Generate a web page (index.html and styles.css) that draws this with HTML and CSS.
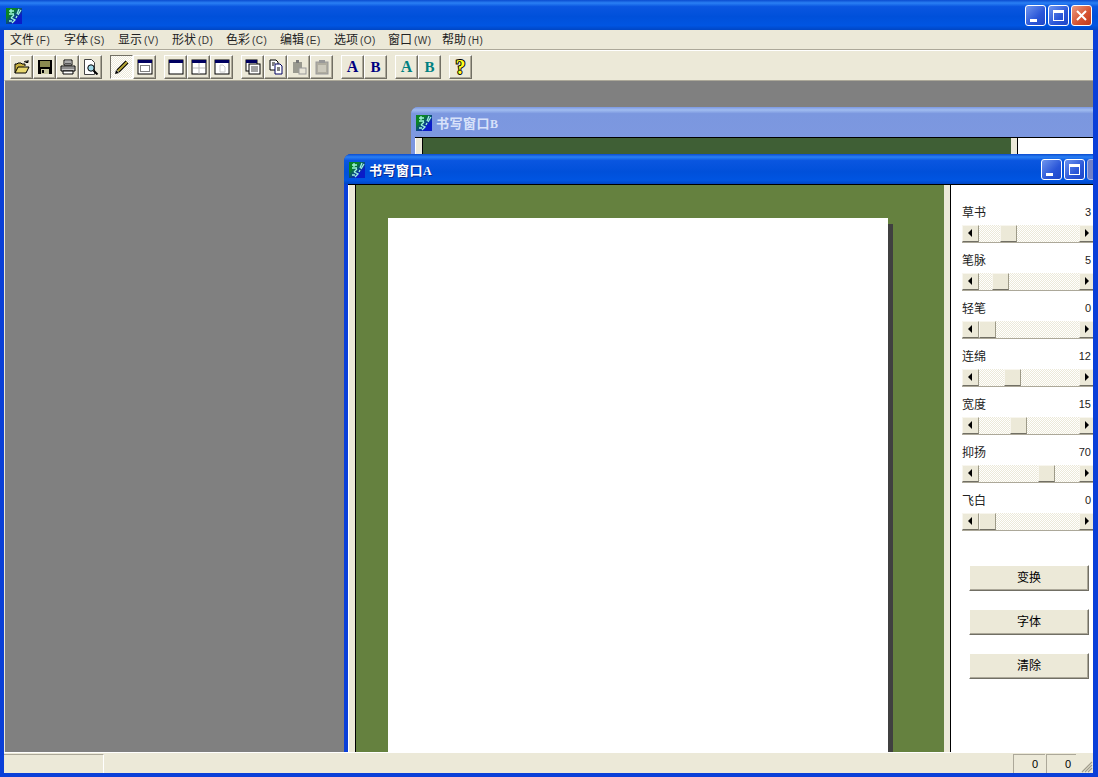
FILE: index.html
```html
<!DOCTYPE html>
<html lang="zh-CN">
<head>
  <meta charset="UTF-8">
  <title>书写窗口</title>
  <link rel="stylesheet" href="styles.css">
</head>
<body>
  <svg class="defs" width="0" height="0">
    <defs>
      <linearGradient id="iconfill" x1="0" y1="0" x2="1" y2="1">
        <stop offset="0.3" stop-color="#0a8424"/>
        <stop offset="0.7" stop-color="#0a1cc8"/>
      </linearGradient>
    </defs>
    <symbol id="appicon" viewBox="0 0 16 16">
      <rect width="16" height="16" fill="url(#iconfill)"/>
      <path d="M3 3h5M5 1v4M3 6h5M8 7l-3 3M5 10l4 2-3 3M3 13h3M13 1l-2 5M15 2l-3 5M11 8l-1 2" stroke="#9ff5dc" stroke-width="1.300" fill="none"/>
    </symbol>
    <symbol id="win" viewBox="0 0 16 16">
      <rect x="1" y="1" width="14" height="14" fill="#fff" stroke="#000"/>
      <rect x="1" y="1" width="14" height="3" fill="#000060"/>
    </symbol>
  </svg>

  <div class="app">
    <div class="titlebar">
      <svg class="appicon"><use href="#appicon"/></svg>
      <div class="capbtns">
        <div class="capbtn"><span class="glyph-min"></span></div>
        <div class="capbtn"><span class="glyph-max"></span></div>
        <div class="capbtn close">
          <svg width="13" height="13" viewBox="0 0 13 13"><path d="M2 2l9 9M11 2l-9 9" stroke="#fff" stroke-width="2"/></svg>
        </div>
      </div>
    </div>

    <div class="main">
      <div class="menubar">
        <span class="menu">文件<i>(F)</i></span>
        <span class="menu">字体<i>(S)</i></span>
        <span class="menu">显示<i>(V)</i></span>
        <span class="menu">形状<i>(D)</i></span>
        <span class="menu">色彩<i>(C)</i></span>
        <span class="menu">编辑<i>(E)</i></span>
        <span class="menu">选项<i>(O)</i></span>
        <span class="menu">窗口<i>(W)</i></span>
        <span class="menu">帮助<i>(H)</i></span>
      </div>

      <div class="toolbar">
        <div class="group">
          <div class="tb"><svg viewBox="0 0 16 16"><path d="M1 14V5h2l1-1h3l1 1h3v2" fill="#c8b040" stroke="#000"/><path d="M1 14l3-6h11l-3 6z" fill="#e8d870" stroke="#000"/><path d="M10 3q2-2 4 0M14 1v2.500h-2.500" fill="none" stroke="#000"/></svg></div>
          <div class="tb"><svg viewBox="0 0 16 16"><path d="M1 1h14v14H1z" fill="#000"/><rect x="3" y="2" width="10" height="6" fill="#8a8a50"/><rect x="4" y="10" width="8" height="5" fill="#c8c8a0"/><rect x="5" y="11" width="2" height="3" fill="#000"/></svg></div>
          <div class="tb"><svg viewBox="0 0 16 16"><path d="M4 1h8v5H4z" fill="#fff" stroke="#000"/><path d="M1 7h14v5H1z" fill="#c8c8c8" stroke="#000"/><path d="M3 12h10v3H3z" fill="#fff" stroke="#000"/><path d="M1 9h14M5 3h6M5 4.500h6" stroke="#555"/></svg></div>
          <div class="tb"><svg viewBox="0 0 16 16"><path d="M1.500 0.500h7l3 3v12h-10z" fill="#fff" stroke="#444"/><circle cx="8" cy="9" r="3.200" fill="#9fd8e8" stroke="#000"/><path d="M10.500 11.500l4 4" stroke="#000" stroke-width="2"/></svg></div>
        </div>
        <div class="group">
          <div class="tb pressed"><svg viewBox="0 0 16 16"><path d="M4 12L13 3" stroke="#000" stroke-width="4"/><path d="M4 12L13 3" stroke="#b8a838" stroke-width="2"/><path d="M1 15l1-4 3 3z" fill="#000"/></svg></div>
          <div class="tb"><svg viewBox="0 0 16 16"><rect x="1" y="1" width="14" height="14" fill="#fff" stroke="#000"/><rect x="1" y="1" width="14" height="3" fill="#000060"/><rect x="3.500" y="6.500" width="9" height="6" fill="none" stroke="#000" stroke-dasharray="1 1"/></svg></div>
        </div>
        <div class="group">
          <div class="tb"><svg viewBox="0 0 16 16"><use href="#win"/></svg></div>
          <div class="tb"><svg viewBox="0 0 16 16"><use href="#win"/><path d="M2 9h12M8 4v11" stroke="#bbb"/></svg></div>
          <div class="tb"><svg viewBox="0 0 16 16"><use href="#win"/><path d="M6 6h3l2 2v5H6z" fill="none" stroke="#ccc"/></svg></div>
        </div>
        <div class="group">
          <div class="tb"><svg viewBox="0 0 16 16"><rect x="1" y="1" width="11" height="11" fill="#fff" stroke="#000"/><rect x="1" y="1" width="11" height="3" fill="#000060"/><rect x="4" y="5" width="11" height="10" fill="#fff" stroke="#000"/><path d="M6 8h7M6 10h7M6 12h7" stroke="#444"/></svg></div>
          <div class="tb"><svg viewBox="0 0 16 16"><path d="M2 1h6l2 2v8H2z" fill="#fff" stroke="#000"/><path d="M7 5h5l2 2v8H7z" fill="#fff" stroke="#000060"/><path d="M4 4h3M4 6h2M9 9h3M9 11h3" stroke="#000"/></svg></div>
          <div class="tb"><svg viewBox="0 0 16 16"><path d="M2 3h9v11H2z" fill="#9a9a90"/><rect x="5" y="1" width="3" height="3" fill="#777"/><rect x="8" y="9" width="7" height="6" fill="#e8e5d8" stroke="#999"/></svg></div>
          <div class="tb"><svg viewBox="0 0 16 16"><rect x="2" y="3" width="12" height="12" fill="#b0ada0" stroke="#999"/><rect x="5" y="1" width="6" height="3" fill="#999"/><rect x="4" y="6" width="8" height="7" fill="#ccc9bc"/></svg></div>
        </div>
        <div class="group">
          <div class="tb letter navy big">A</div>
          <div class="tb letter navy">B</div>
        </div>
        <div class="group">
          <div class="tb letter teal big">A</div>
          <div class="tb letter teal">B</div>
        </div>
        <div class="group">
          <div class="tb letter help">?</div>
        </div>
      </div>

      <div class="mdi">
        <div class="child child-b">
          <div class="caption">
            <svg class="appicon"><use href="#appicon"/></svg>
            <span class="caption-text">书写窗口<b>B</b></span>
          </div>
          <div class="client">
            <div class="bar bar-left"></div>
            <div class="stage"></div>
            <div class="bar"></div>
            <div class="side"></div>
          </div>
        </div>

        <div class="child child-a">
          <div class="caption">
            <svg class="appicon"><use href="#appicon"/></svg>
            <span class="caption-text">书写窗口<b>A</b></span>
            <div class="capbtns">
              <div class="capbtn"><span class="glyph-min"></span></div>
              <div class="capbtn"><span class="glyph-max"></span></div>
              <div class="capbtn off"></div>
            </div>
          </div>
          <div class="client">
            <div class="bar bar-left"></div>
            <div class="stage">
              <div class="paper"></div>
            </div>
            <div class="bar"></div>
            <div class="side">
              <div class="sliders">
                <div class="slider">
                  <div class="slabel"><span>草书</span><span>3</span></div>
                  <div class="hscroll"><div class="arrow left"></div><div class="thumb" style="left:38px"></div><div class="arrow right"></div></div>
                </div>
                <div class="slider">
                  <div class="slabel"><span>笔脉</span><span>5</span></div>
                  <div class="hscroll"><div class="arrow left"></div><div class="thumb" style="left:30px"></div><div class="arrow right"></div></div>
                </div>
                <div class="slider">
                  <div class="slabel"><span>轻笔</span><span>0</span></div>
                  <div class="hscroll"><div class="arrow left"></div><div class="thumb" style="left:17px"></div><div class="arrow right"></div></div>
                </div>
                <div class="slider">
                  <div class="slabel"><span>连绵</span><span>12</span></div>
                  <div class="hscroll"><div class="arrow left"></div><div class="thumb" style="left:42px"></div><div class="arrow right"></div></div>
                </div>
                <div class="slider">
                  <div class="slabel"><span>宽度</span><span>15</span></div>
                  <div class="hscroll"><div class="arrow left"></div><div class="thumb" style="left:48px"></div><div class="arrow right"></div></div>
                </div>
                <div class="slider">
                  <div class="slabel"><span>抑扬</span><span>70</span></div>
                  <div class="hscroll"><div class="arrow left"></div><div class="thumb" style="left:76px"></div><div class="arrow right"></div></div>
                </div>
                <div class="slider">
                  <div class="slabel"><span>飞白</span><span>0</span></div>
                  <div class="hscroll"><div class="arrow left"></div><div class="thumb" style="left:17px"></div><div class="arrow right"></div></div>
                </div>
              </div>
              <div class="actions">
                <div class="btn">变换</div>
                <div class="btn">字体</div>
                <div class="btn">清除</div>
              </div>
            </div>
          </div>
        </div>
      </div>

      <div class="statusbar">
        <div class="pane pane-first"></div>
        <div class="pane pane-fill"></div>
        <div class="pane pane-num">0</div>
        <div class="pane pane-num">0</div>
        <svg class="grip" width="12" height="12" viewBox="0 0 12 12"><path d="M11 1L1 11M11 4L4 11M11 7L7 11" stroke="#a09c8c" stroke-width="1.200"/></svg>
      </div>
    </div>
  </div>
</body>
</html>
```

FILE: styles.css
```css
html, body {
  margin: 0;
  padding: 0;
  height: 100%;
  overflow: hidden;
}
body {
  font-family: "Noto Sans CJK SC", "Liberation Sans", sans-serif;
  font-size: 12px;
  color: #000;
}
.defs {
  position: absolute;
}
.app {
  width: 1098px;
  height: 777px;
  display: flex;
  flex-direction: column;
  background: #0a3fd8;
}
.titlebar {
  height: 30px;
  flex: none;
  display: flex;
  align-items: center;
  padding: 1px 6px 0 6px;
  box-sizing: border-box;
  background: linear-gradient(#0a4cd0 0%, #2a80f4 10%, #0a56e0 22%, #0050da 55%, #0055e2 85%, #0046c4 100%);
}
.appicon {
  width: 16px;
  height: 16px;
  flex: none;
}
.capbtns {
  margin-left: auto;
  display: flex;
  gap: 2px;
}
.capbtn {
  width: 21px;
  height: 21px;
  box-sizing: border-box;
  border: 1px solid #fff;
  border-radius: 3px;
  background: linear-gradient(135deg, #6f95ee, #2a56d8 60%, #1f47c8);
  position: relative;
  display: flex;
  align-items: center;
  justify-content: center;
}
.capbtn.close {
  background: linear-gradient(135deg, #eb9a80, #d5512f 60%, #c03a1c);
}
.capbtn.off {
  background: #6f7fc8;
  border-color: #a8b4e4;
}
.glyph-min {
  position: absolute;
  left: 4px;
  bottom: 3px;
  width: 7px;
  height: 3px;
  background: #fff;
}
.glyph-max {
  width: 9px;
  height: 7px;
  border: 1px solid #fff;
  border-top-width: 3px;
}
.main {
  flex: 1;
  min-height: 0;
  margin: 0 5px 4px 4px;
  display: flex;
  flex-direction: column;
  background: #ece9d8;
}
.menubar {
  height: 20px;
  flex: none;
  display: flex;
  align-items: center;
  padding-left: 6px;
}
.menu {
  width: 54px;
  flex: none;
  white-space: nowrap;
  line-height: 20px;
  color: #222;
}
.menu i {
  font-style: normal;
  font-family: "Liberation Sans", sans-serif;
  font-size: 10px;
  margin-left: 2px;
  letter-spacing: 0.5px;
  color: #333;
}
.toolbar {
  height: 30px;
  flex: none;
  display: flex;
  gap: 8px;
  padding: 4px 0 0 6px;
  box-sizing: border-box;
  border-top: 1px solid #fff;
  box-shadow: 0 -1px 0 #aca899;
}
.group {
  display: flex;
}
.tb {
  width: 23px;
  height: 24px;
  box-sizing: border-box;
  display: flex;
  align-items: center;
  justify-content: center;
  background: #ece9d8;
  border: 1px solid;
  border-color: #fff #716f64 #716f64 #fff;
  box-shadow: inset -1px -1px 0 #aca899;
}
.tb svg {
  width: 16px;
  height: 16px;
}
.tb.pressed {
  border-color: #716f64 #fff #fff #716f64;
  box-shadow: none;
  background: repeating-conic-gradient(#fff 0 25%, #ece9d8 0 50%) 0 0 / 2px 2px;
}
.letter {
  font-family: "Liberation Serif", serif;
  font-weight: bold;
  font-size: 15px;
}
.letter.big {
  font-size: 16px;
}
.navy {
  color: #000080;
}
.teal {
  color: #008080;
}
.help {
  color: #ffff20;
  font-size: 20px;
  -webkit-text-stroke: 2px #000;
  paint-order: stroke fill;
}
.mdi {
  flex: 1;
  min-height: 0;
  position: relative;
  overflow: hidden;
  background: #808080;
  border-top: 1px solid #aca899;
  border-left: 1px solid #ece9d8;
  box-sizing: border-box;
}
.child {
  position: absolute;
  display: flex;
  flex-direction: column;
  height: 700px;
  width: 769px;
  box-sizing: border-box;
  border-radius: 7px 7px 0 0;
  padding: 0 4px;
}
.child-a {
  left: 339px;
  top: 73px;
  background: #0a3fd8;
}
.child-b {
  left: 406px;
  top: 26px;
  background: #7b96e0;
}
.caption {
  height: 30px;
  flex: none;
  margin: 0 -4px;
  padding: 1px 5px 0;
  box-sizing: border-box;
  display: flex;
  align-items: center;
  gap: 4px;
  border-radius: 7px 7px 0 0;
  background: linear-gradient(#0a4cd0 0%, #2a80f4 10%, #0a56e0 22%, #0050da 60%, #0055e2 88%, #0046c4 100%);
}
.child-b .caption {
  background: linear-gradient(#7c98e0 0%, #a0bcf0 10%, #7b97df 22%, #7d98e0 100%);
}
.caption-text {
  color: #fff;
  font-weight: bold;
  font-size: 13px;
  letter-spacing: 0.5px;
  text-shadow: 1px 1px 0 #0a2a90;
}
.caption-text b {
  font-family: "Liberation Serif", serif;
  font-size: 12px;
}
.child-b .caption-text {
  color: #d8e2fa;
  text-shadow: none;
}
.client {
  flex: 1;
  min-height: 0;
  display: flex;
  background: #fff;
  border-top: 1px solid #000;
}
.bar {
  width: 6px;
  flex: none;
  background: #ece9d8;
  box-sizing: border-box;
}
.bar-left {
  width: 7px;
  border-left: 1px solid #fff;
}
.stage {
  width: 589px;
  flex: none;
  border-left: 1px solid #000;
  background: #65813f;
  padding: 33px 0 0 32px;
  box-sizing: border-box;
}
.child-b .stage {
  background: #3f5f35;
}
.paper {
  width: 500px;
  height: 600px;
  background: #fff;
  box-shadow: 5px 6px 0 #404040;
}
.side {
  flex: 1;
  min-width: 0;
  border-left: 1px solid #000;
  padding: 19px 0 0 11px;
  background: #fff;
  overflow: hidden;
}
.sliders {
  display: flex;
  flex-direction: column;
  gap: 9px;
}
.slider {
  width: 143px;
}
.slabel {
  height: 21px;
  line-height: 16px;
  padding-right: 14px;
  display: flex;
  justify-content: space-between;
  color: #222;
}
.slabel span:last-child {
  font-family: "Liberation Sans", sans-serif;
  font-size: 11px;
}
.hscroll {
  position: relative;
  height: 17px;
  width: 131px;
  background: repeating-conic-gradient(#fff 0 25%, #ece9d8 0 50%) 0 0 / 2px 2px;
  border-bottom: 1px solid #aca899;
}
.arrow, .thumb {
  position: absolute;
  top: 0;
  height: 17px;
  box-sizing: border-box;
  background: #ece9d8;
  border: 1px solid;
  border-color: #f8f6ee #9d9a88 #716f64 #f8f6ee;
}
.arrow {
  width: 17px;
}
.arrow.left {
  left: 0;
}
.arrow.right {
  right: 0;
  width: 14px;
  border-right: 0;
}
.arrow::after {
  content: "";
  position: absolute;
  top: 3px;
  border: 4px solid transparent;
}
.arrow.left::after {
  left: 1px;
  border-right-color: #000;
}
.arrow.right::after {
  left: 5px;
  border-left-color: #000;
}
.thumb {
  width: 17px;
}
.actions {
  display: flex;
  flex-direction: column;
  gap: 18px;
  margin: 34px 0 0 7px;
}
.btn {
  width: 120px;
  height: 26px;
  box-sizing: border-box;
  text-align: center;
  line-height: 22px;
  background: #ece9d8;
  border: 1px solid;
  border-color: #fff #716f64 #716f64 #fff;
  box-shadow: inset -1px -1px 0 #aca899;
}
.statusbar {
  height: 21px;
  flex: none;
  display: flex;
  align-items: stretch;
  gap: 1px;
  border-top: 1px solid #fff;
  box-sizing: border-box;
  padding-top: 1px;
  position: relative;
}
.pane {
  box-sizing: border-box;
  border-top: 1px solid #aca899;
  border-right: 1px solid #fff;
}
.pane-first {
  width: 100px;
}
.pane-fill {
  width: 907px;
  border-top: none;
  border-right: none;
}
.pane-num {
  width: 32px;
  text-align: right;
  padding-right: 7px;
  font-family: "Liberation Sans", sans-serif;
  font-size: 11px;
  line-height: 18px;
  border-left: 1px solid #aca899;
  border-right: none;
}
.pane-num:last-of-type {
  width: 30px;
  padding-right: 5px;
}
.grip {
  position: absolute;
  right: 0;
  bottom: 0;
}
```
